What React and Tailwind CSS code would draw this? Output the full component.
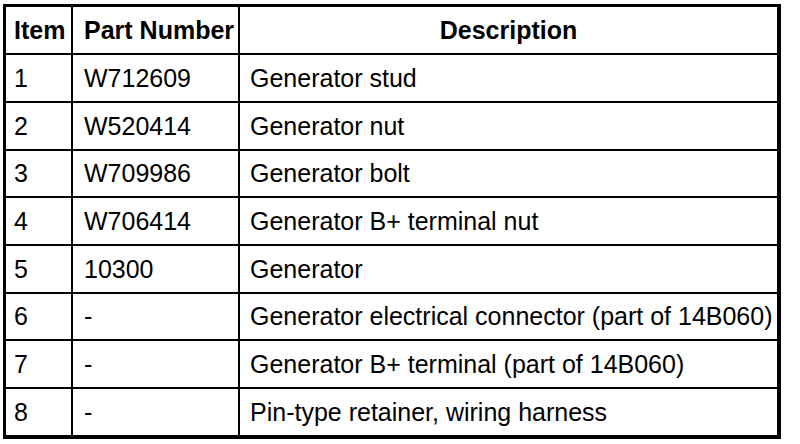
import React from "react";

const rows = [
  ["1", "W712609", "Generator stud", "h-[48px]"],
  ["2", "W520414", "Generator nut", "h-[48px]"],
  ["3", "W709986", "Generator bolt", "h-[47px]"],
  ["4", "W706414", "Generator B+ terminal nut", "h-[48px]"],
  ["5", "10300", "Generator", "h-[48px]"],
  ["6", "-", "Generator electrical connector (part of 14B060)", "h-[47px]"],
  ["7", "-", "Generator B+ terminal (part of 14B060)", "h-[48px]"],
  ["8", "-", "Pin-type retainer, wiring harness", "h-[48px]"],
];

export default function App() {
  return (
    <div className="w-[800px] h-[444px] bg-white pl-[3px] pt-[4px] text-black font-['Liberation_Sans',Arial,sans-serif] text-[25px] leading-none">
      <div className="w-[778px] border-l-[3px] border-t-[3px] border-r-4 border-b-4 border-black">
        <div className="flex h-[46px] font-bold">
          <div className="w-[67px] border-r-2 border-black flex items-center pl-[8px]">Item</div>
          <div className="w-[167px] border-r-2 border-black flex items-center pl-[11px]">Part Number</div>
          <div className="flex-1 flex items-center justify-center">Description</div>
        </div>
        {rows.map(([a, b, c, h]) => (
          <div key={a} className={`flex border-t-2 border-black ${h}`}>
            <div className="w-[67px] border-r-2 border-black flex items-center pl-[8px]">{a}</div>
            <div className="w-[167px] border-r-2 border-black flex items-center pl-[11px]">{b}</div>
            <div className="flex-1 flex items-center pl-[10px]">{c}</div>
          </div>
        ))}
      </div>
    </div>
  );
}
